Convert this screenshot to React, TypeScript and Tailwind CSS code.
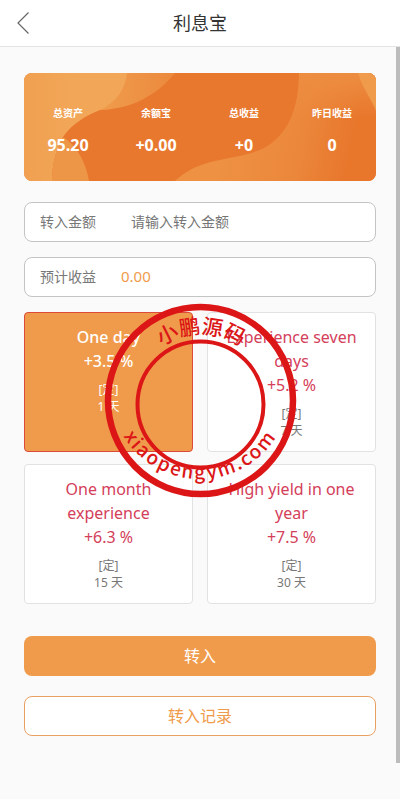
import React from "react";

type Stat = { label: string; value: string };
type Plan = { id: string; name: string; rate: string; days: string };

const stats: Stat[] = [
  { label: "总资产", value: "95.20" },
  { label: "余额宝", value: "+0.00" },
  { label: "总收益", value: "+0" },
  { label: "昨日收益", value: "0" },
];

const plans: Plan[] = [
  { id: "d1", name: "One day", rate: "+3.5 %", days: "1 天" },
  { id: "d7", name: "Experience seven days", rate: "+5.2 %", days: "7 天" },
  { id: "d15", name: "One month experience", rate: "+6.3 %", days: "15 天" },
  { id: "d30", name: "High yield in one year", rate: "+7.5 %", days: "30 天" },
];

function CardArt() {
  return (
    <svg
      className="absolute inset-0 h-full w-full"
      viewBox="0 0 352 108"
      preserveAspectRatio="none"
      aria-hidden="true"
    >
      <defs>
        <linearGradient id="right" gradientUnits="userSpaceOnUse" x1="200" y1="60" x2="325" y2="85">
          <stop offset="0" stopColor="#ee9143" />
          <stop offset="0.6" stopColor="#eb873b" />
          <stop offset="1" stopColor="#e8772c" />
        </linearGradient>
        <linearGradient id="topRight" x1="0" y1="0" x2="0" y2="1">
          <stop offset="0" stopColor="#ed8d40" />
          <stop offset="0.6" stopColor="#ed8d40" stopOpacity="0" />
        </linearGradient>
        <linearGradient id="left" x1="0" y1="0" x2="1" y2="0">
          <stop offset="0" stopColor="#f0a050" />
          <stop offset="0.5" stopColor="#f2a758" />
        </linearGradient>
        <linearGradient id="band" x1="0" y1="0" x2="1" y2="0">
          <stop offset="0" stopColor="#f09c4d" />
          <stop offset="1" stopColor="#eb893c" />
        </linearGradient>
      </defs>
      <rect width="352" height="108" fill="#e8782d" />
      <path d="M275 0C275 35 264 62 240 75C212 89 178 82 151 108H352V0Z" fill="url(#right)" />
      <path d="M275 0C275 35 264 62 240 75L352 60V0Z" fill="url(#topRight)" />
      <path d="M334 0C339 17 349 28 352 38V0Z" fill="#f09a4b" />
      <path d="M103 0H151C133 22 108 36 76 37Z" fill="url(#band)" />
      <path d="M0 0H103C101 17 92 29 76 37C60 43 46 53 39 64C32 76 28 92 28 108H0Z" fill="url(#left)" />
      <path d="M39 64C32 76 28 92 28 108H65C62 91 54 73 39 64Z" fill="#ee9647" />
    </svg>
  );
}

function Stamp() {
  return (
    <svg
      className="pointer-events-none absolute top-1/2 left-1/2 h-[200px] w-[200px] -translate-x-1/2 -translate-y-1/2"
      viewBox="0 0 200 200"
      role="img"
      aria-label="小鹏源码 xiaopengym.com"
    >
      <defs>
        <path id="stampTop" d="M32 103A69 69 0 0 1 170 103" />
        <path id="stampBottom" d="M10 89A90 90 0 0 0 190 89" />
      </defs>
      <ellipse cx="100.5" cy="100.5" rx="92.5" ry="93.5" fill="none" stroke="#dc1616" strokeWidth="6.5" />
      <circle cx="100.5" cy="104.5" r="63" fill="none" stroke="#dc1616" strokeWidth="4" />
      <text className="font-['Noto_Sans_CJK_SC',sans-serif] font-medium" fontSize="21" fill="#dc1616" textAnchor="middle">
        <textPath href="#stampTop" startOffset="50%">小鹏源码</textPath>
      </text>
      <text className="font-['Noto_Sans_CJK_SC',sans-serif] font-medium tracking-widest" fontSize="19" fill="#dc1616" textAnchor="middle">
        <textPath href="#stampBottom" startOffset="50%">xiaopengym.com</textPath>
      </text>
    </svg>
  );
}

function PlanOption({ plan, selected, onSelect }: { plan: Plan; selected: boolean; onSelect: () => void }) {
  return (
    <button
      type="button"
      aria-pressed={selected}
      onClick={onSelect}
      className={
        selected
          ? "flex min-h-[140px] flex-col items-center rounded border border-[#dc4a3a] bg-[#f09b4b] px-3 pt-3 text-white"
          : "flex min-h-[140px] flex-col items-center rounded border border-[#e2e2e2] bg-white px-3 pt-3 text-[#777]"
      }
    >
      <span className={selected ? "text-base leading-6 font-medium" : "text-base leading-6 text-[#d4405a]"}>
        {plan.name}
        <br />
        {plan.rate}
      </span>
      <span className="mt-2 text-xs leading-[17px]">
        [定]
        <br />
        {plan.days}
      </span>
    </button>
  );
}

export default function App() {
  const [selected, setSelected] = React.useState("d1");
  return (
    <div className="relative flex min-h-screen flex-col bg-[#fafafa] font-['Noto_Sans','Noto_Sans_CJK_SC',sans-serif] text-[#333]">
      <header className="grid h-[47px] grid-cols-[48px_1fr_48px] items-center border-b border-[#e4e4e4] bg-white">
        <button type="button" aria-label="返回" className="flex h-full items-center pl-4">
          <svg width="14" height="24" viewBox="0 0 14 24" fill="none" stroke="#666" strokeWidth="1.2" aria-hidden="true">
            <path d="M12.500 1.500L2 12L12.500 22.500" />
          </svg>
        </button>
        <h1 className="text-center text-lg">利息宝</h1>
      </header>

      <main className="flex flex-col px-6 pt-[26px]">
        <section className="relative h-[108px] overflow-hidden rounded-lg text-white">
          <CardArt />
          <dl className="relative grid grid-cols-4 pt-8 text-center font-bold">
            {stats.map((s) => (
              <div key={s.label} className="flex flex-col gap-4">
                <dt className="text-[10px] leading-4">{s.label}</dt>
                <dd className="font-['Open_Sans','Noto_Sans',sans-serif] text-base leading-4">{s.value}</dd>
              </div>
            ))}
          </dl>
        </section>

        <div className="mt-[21px] flex h-10 items-center rounded-lg border border-[#c4c4c4] bg-white px-[15px] text-sm text-[#777]">
          <label htmlFor="amount" className="w-[91px]">转入金额</label>
          <input
            id="amount"
            type="text"
            placeholder="请输入转入金额"
            className="min-w-0 flex-1 bg-transparent outline-none placeholder:text-[#757575]"
          />
        </div>

        <div className="mt-[15px] flex h-10 items-center rounded-lg border border-[#c4c4c4] bg-white px-[15px] text-sm text-[#777]">
          <label htmlFor="earnings" className="w-[81px]">预计收益</label>
          <output id="earnings" className="text-[15px] text-[#f09b4b]">0.00</output>
        </div>

        <section className="mt-[15px] grid grid-cols-2 gap-x-[14px] gap-y-3">
          {plans.map((p) => (
            <PlanOption key={p.id} plan={p} selected={p.id === selected} onSelect={() => setSelected(p.id)} />
          ))}
        </section>

        <button type="button" className="mt-8 h-10 rounded-lg bg-[#f09b4b] text-base text-white">
          转入
        </button>
        <button type="button" className="mt-5 h-10 rounded-lg border border-[#e8a062] bg-white text-base text-[#f09b4b]">
          转入记录
        </button>
      </main>

      <Stamp />
      <div className="absolute top-[47px] right-0 bottom-9 w-1 bg-[#bcbcbc]" aria-hidden="true" />
    </div>
  );
}
